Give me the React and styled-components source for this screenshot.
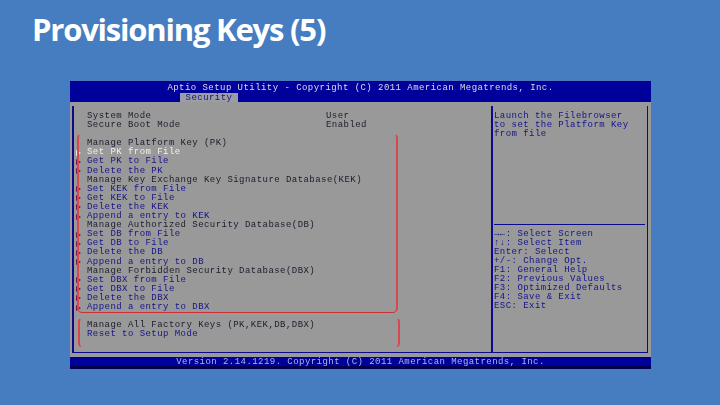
import React from "react";
import styled, { createGlobalStyle } from "styled-components";

const Global = createGlobalStyle`
  html, body { margin: 0; padding: 0; background: #467cc0; }
  #root { width: 720px; height: 405px; overflow: hidden; }
`;

const Slide = styled.div`
  width: 720px;
  height: 405px;
  box-sizing: border-box;
  background: #467cc0;
  padding-left: 32px;
  overflow: hidden;
`;

const Title = styled.h1`
  margin: 0;
  height: 81px;
  padding-top: 9px;
  box-sizing: border-box;
  font: 700 31px/41px "Open Sans", sans-serif;
  letter-spacing: -1.2px;
  color: #fff;
  white-space: nowrap;
`;

const Bios = styled.div`
  width: 581px;
  height: 288px;
  margin-left: 38px;
  display: flex;
  flex-direction: column;
  font: 400 9px/9.1px "Liberation Mono", monospace;
  letter-spacing: 0.45px;
  filter: blur(0.35px);
  white-space: pre;
`;

const TopBar = styled.div`
  height: 21px;
  flex: none;
  background: #00009a;
  border-top: 1px solid #000060;
  box-sizing: border-box;
  display: flex;
  flex-direction: column;
`;

const TopTitle = styled.div`
  height: 11px;
  line-height: 13px;
  text-align: center;
  color: #dcdce8;
`;

const Tab = styled.div`
  width: 58px;
  height: 9px;
  margin-left: 110px;
  background: #9c9ca4;
  color: #15157a;
  text-align: center;
  line-height: 10px;
`;

const Main = styled.div`
  flex: 1;
  background: #999999;
  padding: 4px 3px 4px 2px;
  min-height: 0;
  display: flex;
`;

const Frame = styled.div`
  flex: 1;
  display: flex;
  border: solid #0a0a8a;
  border-width: 0 1px 1px 2px;
`;

const LeftPanel = styled.div`
  position: relative;
  width: 417px;
  flex: none;
  padding: 6px 0 0 2px;
  box-sizing: border-box;
`;

const Row = styled.div`
  height: 9.1px;
  display: flex;
  align-items: center;
  color: ${(p) => (p.$tone === "head" ? "#1c1c2c" : p.$tone === "active" ? "#f0f0f4" : "#14148a")};
`;

const Marker = styled.span`
  width: 11px;
  flex: none;
  display: flex;
  align-items: center;
`;

const Arrow = styled.svg`
  width: 5px;
  height: 6px;
  display: block;
`;

const Label = styled.span`
  width: 239px;
  flex: none;
`;

const Spacer = styled.div`
  height: 9.1px;
`;

const Callout = styled.div`
  position: absolute;
  box-sizing: border-box;
  left: ${(p) => p.$left}px;
  top: ${(p) => p.$top}px;
  width: ${(p) => p.$width}px;
  height: ${(p) => p.$height}px;
  border: solid #d8474b;
  border-width: 2px 2px 1px;
  border-top-color: transparent;
  border-bottom-color: ${(p) => (p.$faintBase ? "#a89090" : "#cc3035")};
  border-radius: 5px;
  pointer-events: none;
`;

const RightPanel = styled.div`
  flex: 1;
  min-width: 0;
  border-left: 2px solid #0a0a8a;
  padding: 6px 0 0 1px;
  display: flex;
  flex-direction: column;
  color: #14148a;
`;

const HelpBlock = styled.div`
  height: 107.5px;
  flex: none;
`;

const RuleSlot = styled.div`
  height: 10px;
  flex: none;
  display: flex;
  align-items: center;
  padding-right: 2px;
`;

const Rule = styled.div`
  flex: 1;
  height: 1px;
  background: #0a0a8a;
`;

const Line = styled.div`
  height: 9.1px;
`;

const Footer = styled.div`
  height: 12px;
  flex: none;
  background: #00009a;
  border-bottom: 3px solid #00004c;
  box-sizing: border-box;
  text-align: center;
  line-height: 10px;
  color: #b4b4dc;
`;

const securityRows = [
  ["Manage Platform Key (PK)", "head"],
  ["Set PK from File", "active", true],
  ["Get PK to File", "item", true],
  ["Delete the PK", "item", true],
  ["Manage Key Exchange Key Signature Database(KEK)", "head"],
  ["Set KEK from File", "item", true],
  ["Get KEK to File", "item", true],
  ["Delete the KEK", "item", true],
  ["Append a entry to KEK", "item", true],
  ["Manage Authorized Security Database(DB)", "head"],
  ["Set DB from File", "item", true],
  ["Get DB to File", "item", true],
  ["Delete the DB", "item", true],
  ["Append a entry to DB", "item", true],
  ["Manage Forbidden Security Database(DBX)", "head"],
  ["Set DBX from File", "item", true],
  ["Get DBX to File", "item", true],
  ["Delete the DBX", "item", true],
  ["Append a entry to DBX", "item", true],
];

const help = ["Launch the Filebrowser", "to set the Platform Key", "from file"];
const keys = [
  "\u2192\u2190: Select Screen",
  "\u2191\u2193: Select Item",
  "Enter: Select",
  "+/-: Change Opt.",
  "F1: General Help",
  "F2: Previous Values",
  "F3: Optimized Defaults",
  "F4: Save & Exit",
  "ESC: Exit",
];

const MenuRow = ({ text, tone, arrow, value }) => (
  <Row $tone={tone}>
    <Marker>
      {arrow && (
        <Arrow viewBox="0 0 5 6">
          <path d="M0 0L5 3L0 6Z" fill={tone === "active" ? "#f0e8ec" : "#7c1450"} />
        </Arrow>
      )}
    </Marker>
    <Label>{text}</Label>
    {value && <span>{value}</span>}
  </Row>
);

export default function App() {
  return (
    <Slide>
      <Global />
      <Title>Provisioning Keys (5)</Title>
      <Bios>
        <TopBar>
          <TopTitle>Aptio Setup Utility - Copyright (C) 2011 American Megatrends, Inc.</TopTitle>
          <Tab>Security</Tab>
        </TopBar>
        <Main>
          <Frame>
            <LeftPanel>
              <MenuRow text="System Mode" tone="head" value="User" />
              <MenuRow text="Secure Boot Mode" tone="head" value="Enabled" />
              <Spacer />
              {securityRows.map(([text, tone, arrow]) => (
                <MenuRow key={text} text={text} tone={tone} arrow={arrow} />
              ))}
              <Spacer />
              <MenuRow text="Manage All Factory Keys (PK,KEK,DB,DBX)" tone="head" />
              <MenuRow text="Reset to Setup Mode" tone="item" />
              <Callout $left={3} $top={27} $width={321} $height={180} />
              <Callout $left={4} $top={211} $width={322} $height={31} $faintBase />
            </LeftPanel>
            <RightPanel>
              <HelpBlock>
                {help.map((t) => (
                  <Line key={t}>{t}</Line>
                ))}
              </HelpBlock>
              <RuleSlot>
                <Rule />
              </RuleSlot>
              {keys.map((t) => (
                <Line key={t}>{t}</Line>
              ))}
            </RightPanel>
          </Frame>
        </Main>
        <Footer>Version 2.14.1219. Copyright (C) 2011 American Megatrends, Inc.</Footer>
      </Bios>
    </Slide>
  );
}
